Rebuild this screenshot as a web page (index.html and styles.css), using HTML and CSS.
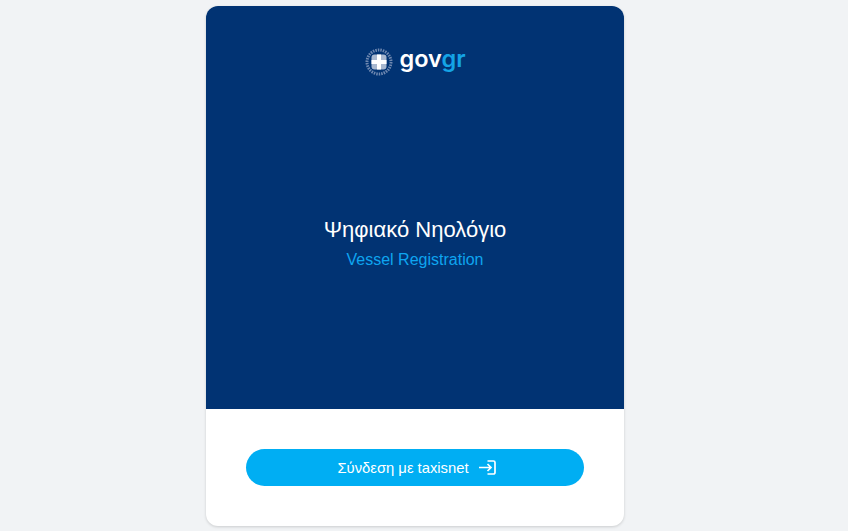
FILE: index.html
```html
<!DOCTYPE html>
<html lang="el">
<head>
  <meta charset="UTF-8" />
  <meta name="viewport" content="width=device-width, initial-scale=1.0"/>
  <title>Ψηφιακό Νηολόγιο</title>
  <link rel="stylesheet" href="styles.css">
</head>
<body>
  <div class="card">
    <div class="card-top">
      <div class="logo">
        <svg class="emblem" width="28" height="28" viewBox="0 0 28 28" aria-hidden="true">
          <circle cx="14" cy="14" r="12" fill="none" stroke="#6f88b0" stroke-width="3" stroke-dasharray="1.5 1"/>
          <rect x="6.500" y="6.500" width="15" height="15" rx="3" fill="#a9b8cf"/>
          <path d="M12 6.500h4v5.500h5.500v4h-5.500v5.500h-4v-5.500h-5.500v-4h5.500z" fill="#fff"/>
        </svg>
        <span class="logo-text">gov<span class="logo-gr">gr</span></span>
      </div>
      <div class="titles">
        <h1>Ψηφιακό Νηολόγιο</h1>
        <p>Vessel Registration</p>
      </div>
    </div>
    <div class="card-bottom">
      <button class="login-btn">
        Σύνδεση με taxisnet
        <svg width="17" height="15" viewBox="0 0 17 15" fill="none" stroke="#fff" stroke-width="1.700" aria-hidden="true">
          <path d="M0 7.500h12M8.500 4l3.500 3.500-3.500 3.500"/>
          <path d="M8.500 1h6a1.500 1.500 0 0 1 1.500 1.500v10a1.500 1.500 0 0 1-1.500 1.500h-6"/>
        </svg>
      </button>
    </div>
  </div>
</body>
</html>
```

FILE: styles.css
```css
* {
  box-sizing: border-box;
  margin: 0;
  padding: 0;
}

body {
  font-family: 'Liberation Sans', Arial, sans-serif;
  background: #f1f3f5;
  display: flex;
  justify-content: center;
  min-height: 100vh;
  padding: 6px 18px 5px 0;
  overflow: hidden;
}

.card {
  width: 418px;
  height: 520px;
  border-radius: 12px;
  overflow: hidden;
  background: #fff;
  box-shadow: 0 1px 3px rgba(0, 0, 0, 0.16);
  display: flex;
  flex-direction: column;
}

.card-top {
  height: 403px;
  background: #013373;
  padding-top: 41px;
  text-align: center;
}

.logo {
  display: flex;
  justify-content: center;
  align-items: center;
  gap: 7px;
  height: 30px;
}

.logo-text {
  font-family: 'Inter', sans-serif;
  font-size: 23.500px;
  font-weight: 600;
  color: #fff;
  line-height: 30px;
  padding-bottom: 6px;
}

.logo-gr {
  color: #14a4e6;
}

.titles {
  margin-top: 137px;
}

h1 {
  font-size: 22px;
  font-weight: 400;
  color: #fff;
  line-height: 32px;
}

p {
  font-size: 16px;
  color: #0ea5f0;
  line-height: 26px;
  margin-top: 1px;
}

.card-bottom {
  padding: 40px;
}

.login-btn {
  width: 100%;
  height: 37px;
  border: none;
  border-radius: 19px;
  background: #00aef3;
  color: #fff;
  font-family: inherit;
  font-size: 14.800px;
  display: flex;
  justify-content: center;
  align-items: center;
  gap: 10px;
  padding-left: 3px;
  cursor: pointer;
}
```
